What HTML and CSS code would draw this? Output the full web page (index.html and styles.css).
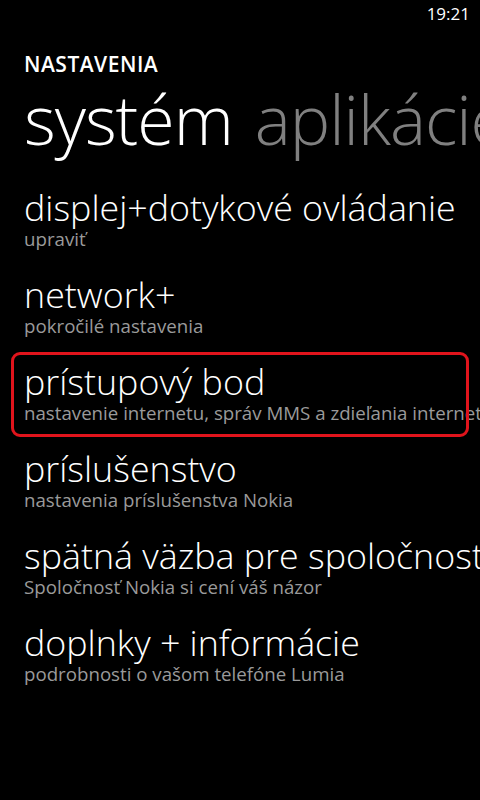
FILE: index.html
```html
<!DOCTYPE html>
<html lang="sk">
  <head>
    <meta charset="UTF-8" />
    <meta name="viewport" content="width=device-width, initial-scale=1.0" />
    <title>Nastavenia</title>
    <link rel="stylesheet" href="styles.css">
  </head>
  <body>
    <header class="status-bar">
      <span class="clock">19:21</span>
    </header>
    <main class="container">
      <h1 class="app-title">NASTAVENIA</h1>
      <nav class="pivot">
        <span class="pivot-item active">systém</span>
        <span class="pivot-item">aplikácie</span>
      </nav>
      <section class="settings">
        <article class="setting">
          <h2>displej+dotykové ovládanie</h2>
          <p>upraviť</p>
        </article>
        <article class="setting">
          <h2>network+</h2>
          <p>pokročilé nastavenia</p>
        </article>
        <article class="setting highlighted">
          <h2>prístupový bod</h2>
          <p>nastavenie internetu, správ MMS a zdieľania internetu</p>
        </article>
        <article class="setting">
          <h2>príslušenstvo</h2>
          <p>nastavenia príslušenstva Nokia</p>
        </article>
        <article class="setting">
          <h2>spätná väzba pre spoločnosť Nokia</h2>
          <p>Spoločnosť Nokia si cení váš názor</p>
        </article>
        <article class="setting">
          <h2>doplnky + informácie</h2>
          <p>podrobnosti o vašom telefóne Lumia</p>
        </article>
      </section>
    </main>
  </body>
</html>
```

FILE: styles.css
```css
/* styles.css */
html,
body {
  margin: 0;
  height: 100%;
  background-color: #000;
}

body {
  color: #fff;
  font-family: "Open Sans", "Noto Sans", sans-serif;
  overflow: hidden;
}

.status-bar {
  display: flex;
  justify-content: flex-end;
  height: 30px;
  padding-right: 10px;
}

.clock {
  font-size: 17px;
  line-height: 28px;
}

.container {
  padding-left: 24px;
}

.app-title {
  margin: 20px 0 0;
  font-size: 21px;
  font-weight: 600;
  line-height: 28px;
  letter-spacing: 0.5px;
}

.pivot {
  display: flex;
  gap: 22px;
  white-space: nowrap;
  overflow: hidden;
  height: 80px;
  margin-top: 4px;
}

.pivot-item {
  font-size: 68px;
  font-weight: 300;
  line-height: 74px;
  letter-spacing: -1px;
  color: #808080;
}

.pivot-item.active {
  color: #fff;
}

.settings {
  display: flex;
  flex-direction: column;
  margin-top: 25px;
}

.setting {
  position: relative;
  height: 87px;
  white-space: nowrap;
}

.setting h2 {
  margin: 0;
  font-size: 35.8px;
  font-weight: 300;
  line-height: 41px;
}

.setting p {
  margin: 0;
  font-size: 18.7px;
  line-height: 22px;
  color: #9a9a9a;
}

.highlighted::before {
  content: "";
  position: absolute;
  left: -13px;
  top: -9px;
  width: 452px;
  height: 79px;
  border: 3px solid #e0141c;
  border-radius: 9px;
}
```
